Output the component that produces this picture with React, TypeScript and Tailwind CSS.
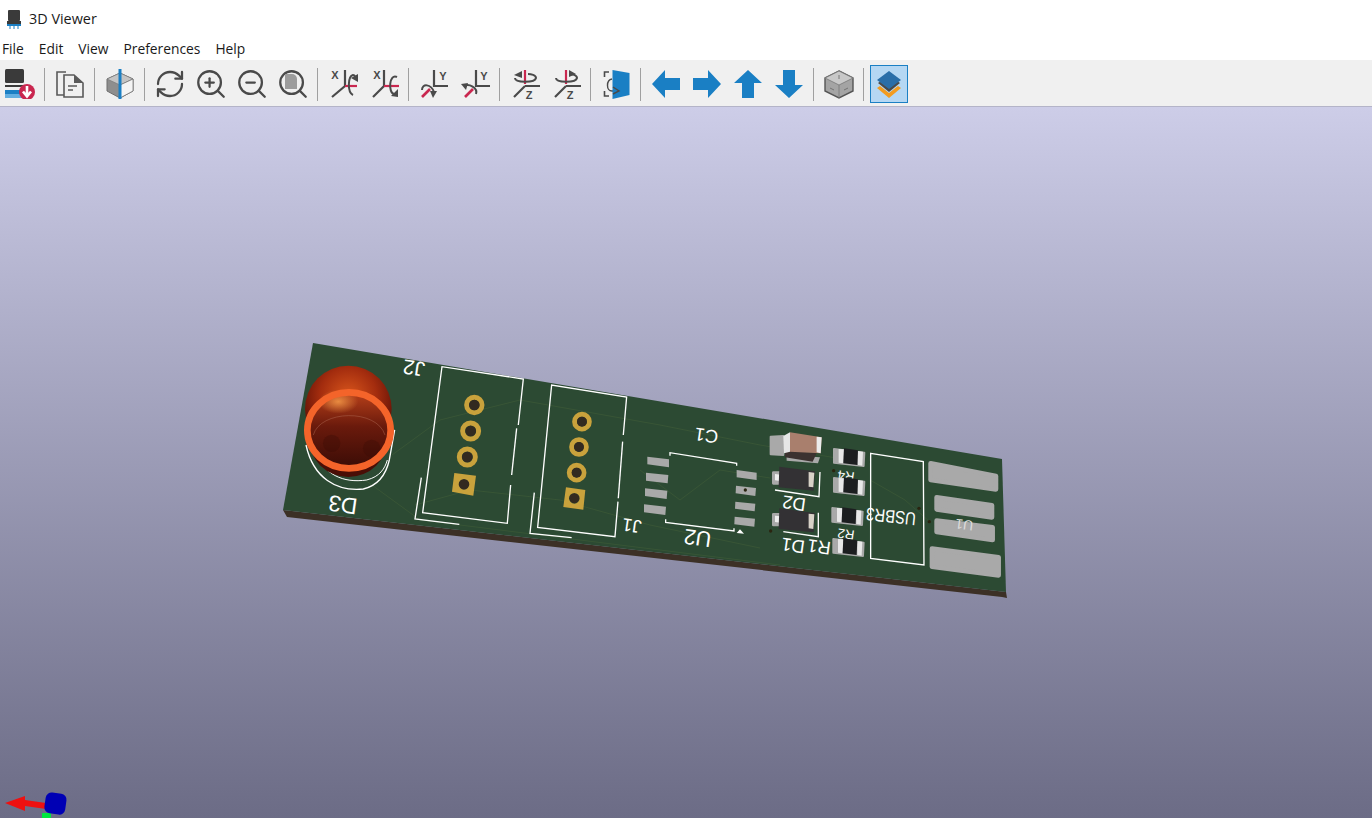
import { RefreshCw, Search, ZoomIn, ZoomOut } from 'lucide-react';
import type { ReactNode } from 'react';

const DARK = '#4a4a4a';
const RED = '#c9274f';
const BLUE = '#1a7fc4';

const Ic = ({ children }: { children: ReactNode }) => (
  <svg viewBox="0 0 28 28" className="w-7 h-7 overflow-visible">
    {children}
  </svg>
);

const Btn = ({ children }: { children: ReactNode }) => (
  <div className="w-[41px] h-[38px] flex items-center justify-center shrink-0">{children}</div>
);

const Sep = () => (
  <div className="w-[9px] h-[33px] flex justify-center shrink-0">
    <div className="w-px h-full bg-[#a0a0a0]" />
  </div>
);

const Letter = ({ x, y, c }: { x: number; y: number; c: string }) => (
  <text x={x} y={y} fontSize="11" fontWeight="700" textAnchor="middle" fill={DARK} className="font-['Liberation_Sans']">
    {c}
  </text>
);

const RotX = ({ flip }: { flip?: boolean }) => (
  <Ic>
    <Letter x={flip ? 7 : 6} y={9} c="X" />
    <path d={flip ? 'M14 0V16L3 27' : 'M16 0V16L3 27'} stroke={DARK} strokeWidth="2.2" fill="none" />
    <path d={flip ? 'M14 16H29' : 'M16 16H28'} stroke={RED} strokeWidth="2.2" />
    {flip ? (
      <>
        <path d="M27 7C19 3 18 23 24 24" stroke={DARK} strokeWidth="2" fill="none" />
        <path d="M21 26L28 19L28 27Z" fill={DARK} />
      </>
    ) : (
      <>
        <path d="M24 25C18 22 19 6 24 5C26 5 27 8 27 10" stroke={DARK} strokeWidth="2" fill="none" />
        <path d="M22 8L29 12L29 4Z" fill={DARK} />
      </>
    )}
  </Ic>
);

const RotY = ({ flip }: { flip?: boolean }) => (
  <Ic>
    <Letter x={23} y={10} c="Y" />
    <path d={flip ? 'M15 0V16H29' : 'M14 0V16H28'} stroke={DARK} strokeWidth="2.2" fill="none" />
    <path d={flip ? 'M4 27L12 19' : 'M2 27L10 19'} stroke={RED} strokeWidth="2.6" />
    {flip ? (
      <>
        <path d="M15 24C17 18 8 13 3 16" stroke={DARK} strokeWidth="2" fill="none" />
        <path d="M0 14L7 13L5 20Z" fill={DARK} />
      </>
    ) : (
      <>
        <path d="M2 20C2 13 11 14 14 22" stroke={DARK} strokeWidth="2" fill="none" />
        <path d="M10 21L17 21L13 28Z" fill={DARK} />
      </>
    )}
  </Ic>
);

const RotZ = ({ flip }: { flip?: boolean }) => (
  <Ic>
    <path d="M14 0V14" stroke={RED} strokeWidth="2.2" />
    <path d="M14 16H29M14 16L3 27" stroke={DARK} strokeWidth="2.2" fill="none" />
    <Letter x={18} y={29} c="Z" />
    <path d="M4 8C4 13 24 13 25 8C25 5 20 4 17 4" stroke={DARK} strokeWidth="2" fill="none" />
    {flip ? <path d="M17 0L24 4L17 7Z" fill={DARK} /> : <path d="M11 1L3 5L11 8Z" fill={DARK} />}
  </Ic>
);

const Arrow = ({ rotate }: { rotate: string }) => (
  <svg viewBox="0 0 28 28" className={`w-7 h-7 ${rotate}`}>
    <path d="M0 14L13 0V8H28V20H13V28Z" fill={BLUE} />
  </svg>
);

const Toolbar = () => (
  <div className="flex items-center h-[47px] bg-[#f0f0f0] pt-[2px] border-b border-[#b4b4c8] shrink-0">
    <div className="w-[40px] h-[38px] flex items-center justify-center shrink-0">
      <svg viewBox="0 0 30 30" className="w-[30px] h-[30px]">
        <rect x="0" y="0" width="19" height="14" rx="1.5" fill="#3a3a3a" />
        <rect x="0" y="16" width="19" height="2" fill="#3a3a3a" />
        <rect x="0" y="21" width="20" height="4" fill="#1a7fc4" />
        <rect x="0" y="25" width="20" height="4" fill="#62aee0" />
        <circle cx="22" cy="23" r="8" fill="#c9274f" />
        <path d="M22 17V27M18 22.5L22 27.5L26 22.5" stroke="#fff" strokeWidth="2.6" fill="none" />
      </svg>
    </div>
    <Sep />
    <Btn>
      <Ic>
        <path d="M10 2H1V25H8" fill="#f0f0f0" stroke="#5a5a5a" strokeWidth="1.6" />
        <path d="M8 5H18L27 13V27H8Z" fill="#f0f0f0" stroke="#5a5a5a" strokeWidth="1.6" />
        <path d="M18 5V13H27Z" fill="#5a5a5a" />
        <path d="M12 16H21M12 20H17" stroke="#5a5a5a" strokeWidth="1.6" />
      </Ic>
    </Btn>
    <Sep />
    <Btn>
      <Ic>
        <path d="M14 3L27 9V21L14 28L1 21V9Z" fill="#8e8e8e" stroke="#6e6e6e" />
        <path d="M1 9L14 3L27 9L14 15Z" fill="#c4c4c4" stroke="#7a7a7a" strokeWidth=".7" />
        <path d="M14 15L27 9V21L14 28Z" fill="#f4f4f4" stroke="#6e6e6e" strokeWidth=".7" />
        <path d="M14 -1V29" stroke={BLUE} strokeWidth="3" />
      </Ic>
    </Btn>
    <Sep />
    <Btn>
      <RefreshCw size={32} strokeWidth={1.7} color={DARK} />
    </Btn>
    <Btn>
      <ZoomIn size={34} strokeWidth={1.6} color={DARK} />
    </Btn>
    <Btn>
      <ZoomOut size={34} strokeWidth={1.6} color={DARK} />
    </Btn>
    <Btn>
      <div className="relative w-[34px] h-[34px]">
        <Search size={34} strokeWidth={1.6} color={DARK} />
        <div className="absolute left-[9px] top-[7px] w-[12px] h-[15px] bg-[#9c9c9c] rounded-tr-[5px]" />
      </div>
    </Btn>
    <Sep />
    <Btn>
      <RotX />
    </Btn>
    <Btn>
      <RotX flip />
    </Btn>
    <Sep />
    <Btn>
      <RotY />
    </Btn>
    <Btn>
      <RotY flip />
    </Btn>
    <Sep />
    <Btn>
      <RotZ />
    </Btn>
    <Btn>
      <RotZ flip />
    </Btn>
    <Sep />
    <Btn>
      <Ic>
        <path d="M7 2H2.5V7M2.5 21V26H7" stroke={DARK} strokeWidth="1.6" fill="none" />
        <path d="M10 9C4 10 4 21 10 21H15" stroke={DARK} strokeWidth="1.4" fill="none" />
        <path d="M10.5 0L27.5 3V25L10.5 29Z" fill={BLUE} />
        <path d="M11 17L17 21L11 24" stroke={DARK} strokeWidth="1.4" fill="none" />
      </Ic>
    </Btn>
    <Sep />
    <Btn>
      <Arrow rotate="" />
    </Btn>
    <Btn>
      <Arrow rotate="rotate-180" />
    </Btn>
    <Btn>
      <Arrow rotate="rotate-90" />
    </Btn>
    <Btn>
      <Arrow rotate="-rotate-90" />
    </Btn>
    <Sep />
    <Btn>
      <Ic>
        <path d="M14 1L28 8V21L14 28L0 21V8Z" fill="#a4a4a4" stroke="#555" strokeWidth="1.4" />
        <path d="M14 1L28 8L14 15L0 8Z" fill="#c8c8c8" stroke="#777" strokeWidth=".8" />
        <path d="M14 15V28" stroke="#777" strokeWidth=".8" />
        <path d="M14 5V9M5 18L9 20M23 18L19 20" stroke="#666" strokeWidth=".8" />
      </Ic>
    </Btn>
    <Sep />
    <div className="w-[38px] h-[38px] ml-[2px] flex items-center justify-center bg-[#b5d7f3] border border-[#1a7fc4] shrink-0">
      <svg viewBox="0 0 24 27" className="w-6 h-[27px]">
        <path d="M0 17L12 27L24 17L21 15L12 22L3 15Z" fill="#f39c1f" />
        <path d="M1 12L12 21L23 12L20 10L4 10Z" fill="#4a4a4a" />
        <path d="M12 0L24 9L12 18L0 9Z" fill="#2a6ea8" />
      </svg>
    </div>
  </div>
);

const Silk = ({ x, y, size = 55, rot = 188, children }: { x: number; y: number; size?: number; rot?: number; children: string }) => (
  <text
    x={x}
    y={y}
    fontSize={size}
    textAnchor="middle"
    fill="#ffffff"
    transform={`rotate(${rot} ${x} ${y})`}
    className="font-['Liberation_Sans']"
  >
    {children}
  </text>
);

const Poly = ({ p, fill }: { p: string; fill: string }) => <polygon points={p} fill={fill} />;

const Pad = ({ p }: { p: string }) => (
  <polygon points={p} fill="#a9a9a9" stroke="#a9a9a9" strokeWidth="14" strokeLinejoin="round" />
);

const Resistor = ({ dx, dy }: { dx: number; dy: number }) => (
  <g transform={`translate(${dx} ${dy})`}>
    <polygon points="642,147 733,158 731,198 642,188" fill="#a9a9a9" stroke="#a9a9a9" strokeWidth="6" strokeLinejoin="round" />
    <Poly p="656,147 672,148 670,190 656,188" fill="#e8e8e8" />
    <Poly p="714,153 729,155 727,197 714,195" fill="#e8e8e8" />
    <Poly p="672,145 714,151 712,195 670,190" fill="#1c1e20" />
  </g>
);

const Diode = ({ dy }: { dy: number }) => (
  <g transform={`translate(0 ${dy})`}>
    <polygon points="460,218 480,218 480,250 460,250" fill="#a9a9a9" stroke="#a9a9a9" strokeWidth="8" strokeLinejoin="round" />
    <Poly p="465,222 482,224 482,243 465,241" fill="#efefef" />
    <Poly p="478,200 585,214 581,272 476,262" fill="#333134" />
    <Poly p="566,216 583,218 580,262 566,260" fill="#d8d2c8" />
  </g>
);

const Pcb = () => (
  <svg viewBox="0 107 1372 711" className="absolute inset-0 w-full h-full">
    <defs>
      <radialGradient id="dome" cx="50%" cy="35%" r="60%">
        <stop offset="0%" stopColor="#d8561c" />
        <stop offset="55%" stopColor="#a32c0e" />
        <stop offset="100%" stopColor="#5a0f06" />
      </radialGradient>
      <linearGradient id="lens" x1="0" y1="0" x2="0" y2="1">
        <stop offset="0%" stopColor="#b8401a" />
        <stop offset="45%" stopColor="#6a1a0c" />
        <stop offset="100%" stopColor="#3a0c06" />
      </linearGradient>
      <radialGradient id="glow">
        <stop offset="0%" stopColor="#f59a48" stopOpacity=".85" />
        <stop offset="100%" stopColor="#f59a48" stopOpacity="0" />
      </radialGradient>
    </defs>

    <polygon points="283,510 1006,592 1007,598 1002,597 287,517" fill="#3c3026" />
    <polygon points="313,343 1002,459 1006,592 283,510" fill="#2c4a33" />

    {/* faint copper traces */}
    <g stroke="#385536" strokeWidth="1" fill="none">
      <path d="M392 455L440 420L520 400L660 425L760 445L860 462" />
      <path d="M415 505L470 490L560 500L650 525L760 548" />
      <path d="M365 480L420 520L620 545L780 565" />
      <path d="M640 470L680 500L720 470L770 478" />
      <path d="M870 480L905 500L930 522" />
    </g>

    {/* left half, coordinates from 3x crop */}
    <g transform="translate(270 335) scale(.3333)">
      <path d="M108 330C130 430 200 470 280 462C330 450 350 410 358 375L374 285" stroke="#fff" strokeWidth="4" fill="none" />
      <path d="M135 345C160 420 220 445 290 435C330 425 345 400 352 375" stroke="#fff" strokeWidth="3" fill="none" />
      <ellipse cx="235" cy="310" rx="118" ry="116" fill="#4a0e06" />
      <circle cx="235" cy="222" r="130" fill="url(#dome)" />
      <ellipse cx="237" cy="286" rx="125" ry="114" fill="url(#lens)" />
      <ellipse cx="205" cy="200" rx="60" ry="36" fill="url(#glow)" />
      <path d="M130 300C150 225 320 220 345 300" fill="none" stroke="#b06a55" strokeWidth="2" opacity=".7" />
      <circle cx="185" cy="325" r="26" fill="#3a0c06" opacity=".35" />
      <circle cx="305" cy="340" r="26" fill="#3a0c06" opacity=".35" />
      <ellipse cx="237" cy="286" rx="125" ry="114" fill="none" stroke="#f4642a" strokeWidth="20" />

      <g fill="none" stroke="#fff" strokeWidth="4">
        <path d="M745 270L760 132L516 95L458 533L712 565L722 450" />
        <path d="M740 280L725 420" />
        <path d="M454 428L435 552L568 568" />
        <path d="M1060 300L1070 186L845 150L803 577L1035 605L1044 500" />
        <path d="M1058 320L1045 490" />
        <path d="M793 473L780 595L905 608" />
      </g>

      <g fill="none" stroke="#c9a23c" strokeWidth="15">
        <circle cx="613" cy="210" r="23" />
        <circle cx="602" cy="288" r="24" />
        <circle cx="592" cy="366" r="24" />
        <circle cx="936" cy="260" r="22" />
        <circle cx="927" cy="336" r="22" />
        <circle cx="920" cy="413" r="22" />
      </g>
      <g fill="#322a20">
        <circle cx="613" cy="210" r="16" />
        <circle cx="602" cy="288" r="16" />
        <circle cx="592" cy="366" r="16" />
        <circle cx="582" cy="448" r="16" />
        <circle cx="936" cy="260" r="15" />
        <circle cx="927" cy="336" r="15" />
        <circle cx="920" cy="413" r="15" />
        <circle cx="913" cy="490" r="15" />
      </g>
      <path fillRule="evenodd" d="M553 414L618 422L610 482L546 470ZM582 432A16 16 0 1 0 582.1 464A16 16 0 1 0 582 432Z" fill="#c9a23c" />
      <path fillRule="evenodd" d="M888 457L946 465L940 524L880 516ZM913 474A16 16 0 1 0 913.1 506A16 16 0 1 0 913 474Z" fill="#c9a23c" />

      <Silk x={435} y={78} size={62}>J2</Silk>
      <Silk x={222} y={486} size={68}>D3</Silk>
    </g>

    {/* right half, coordinates from 3x crop */}
    <g transform="translate(620 400) scale(.3333)">
      <Poly p="82,170 147,178 147,202 82,193" fill="#a9a9a9" />
      <Poly p="78,218 145,225 143,250 78,242" fill="#a9a9a9" />
      <Poly p="75,265 142,272 140,297 75,288" fill="#a9a9a9" />
      <Poly p="72,313 138,320 136,345 72,337" fill="#a9a9a9" />
      <Poly p="350,210 410,218 410,240 350,232" fill="#a9a9a9" />
      <Poly p="348,257 408,264 406,288 347,280" fill="#a9a9a9" />
      <Poly p="346,305 406,311 404,334 345,326" fill="#a9a9a9" />
      <Poly p="344,350 405,356 403,380 343,373" fill="#a9a9a9" />
      <g fill="none" stroke="#fff" strokeWidth="4">
        <path d="M150 167V158L350 190V197" />
        <path d="M137 358V367L342 393V385" />
        <path d="M752 160L910 185L912 495L752 475Z" />
        <path d="M600 216L597 290L465 270" />
        <path d="M595 338V410L490 395" />
      </g>
      <Poly p="350,399 372,401 360,388" fill="#ffffff" />

      <Pad p="932,190 1128,228 1128,268 932,240" />
      <Pad p="950,292 1116,316 1116,352 950,328" />
      <Pad p="950,362 1118,382 1118,420 950,396" />
      <Pad p="936,446 1136,472 1136,526 936,500" />

      <Silk x={525} y={291}>D2</Silk>
      <Silk x={680} y={389} size={40}>R2</Silk>
      <Silk x={680} y={214} size={40}>R4</Silk>

      {/* C1 */}
      <polygon points="452,110 490,108 490,165 452,163" fill="#a9a9a9" stroke="#a9a9a9" strokeWidth="6" strokeLinejoin="round" />
      <Poly p="500,165 600,172 594,190 500,182" fill="#a9a9a9" />
      <Poly p="495,150 590,160 578,185 495,172" fill="#3c3230" />
      <Poly p="490,108 510,97 510,155 492,160" fill="#e6e6e6" />
      <Poly p="510,97 605,112 602,160 510,155" fill="#a97f6d" />
      <Poly p="590,110 605,112 602,160 590,157" fill="#ececec" />

      <Diode dy={0} />
      <Diode dy={125} />
      <Resistor dx={0} dy={0} />
      <Resistor dx={0} dy={87} />
      <Resistor dx={-5} dy={177} />
      <Resistor dx={-2} dy={270} />

      <g fill="#2a2410">
        <circle cx="376" cy="270" r="5" />
        <circle cx="641" cy="212" r="5" />
        <circle cx="452" cy="393" r="5" />
        <circle cx="897" cy="325" r="5" />
        <circle cx="928" cy="365" r="5" />
      </g>

      <Silk x={262} y={88}>C1</Silk>
      <Silk x={236} y={392} size={65}>U2</Silk>
      <Silk x={38} y={358}>J1</Silk>
      <Silk x={522} y={418}>D1</Silk>
      <Silk x={600} y={422}>R1</Silk>
      <text
        x={815}
        y={331}
        fontSize="54"
        textAnchor="middle"
        textLength="150"
        lengthAdjust="spacingAndGlyphs"
        fill="#ffffff"
        transform="rotate(186 815 331)"
        className="font-['Liberation_Sans']"
      >
        USBR3
      </text>
      <text x={1035} y={360} fontSize="42" textAnchor="middle" fill="#dcdcdc" transform="rotate(187 1035 360)" className="font-['Liberation_Sans']">
        U1
      </text>
    </g>

    {/* axis marker */}
    <polygon points="5,803 25,796 25,800 46,803 46,809 25,806 25,811" fill="#ee1010" />
    <rect x="42" y="813" width="9" height="6" fill="#00e640" />
    <rect x="45" y="793" width="21" height="21" rx="6" fill="#0000b4" transform="rotate(8 55 803)" />
  </svg>
);

const App = () => {
  return (
    <div className="w-[1372px] h-[818px] flex flex-col bg-white overflow-hidden font-['Open_Sans','Liberation_Sans',sans-serif] text-[13.8px] text-[#1a1a1a]">
      <div className="h-[38px] flex items-center pl-[7px] gap-2 shrink-0">
        <svg viewBox="0 0 14 19" className="w-[14px] h-[19px]">
          <rect x="1" y="0" width="12" height="11" rx="1" fill="#3a3a3a" />
          <rect x="0" y="11" width="14" height="3" fill="#3a3a3a" />
          <rect x="0" y="14" width="14" height="2" fill="#1a7fc4" />
          <path d="M3 16V19M7 16V19M11 16V19" stroke="#1a7fc4" />
        </svg>
        <span className="text-[14.4px]">3D Viewer</span>
      </div>
      <div className="h-[22px] flex items-center pl-[2px] gap-[15px] shrink-0">
        <span>File</span>
        <span>Edit</span>
        <span>View</span>
        <span>Preferences</span>
        <span>Help</span>
      </div>
      <Toolbar />
      <div className="relative flex-1 bg-gradient-to-b from-[#cdcde8] to-[#6c6c86]">
        <Pcb />
      </div>
    </div>
  );
};

export default App;
